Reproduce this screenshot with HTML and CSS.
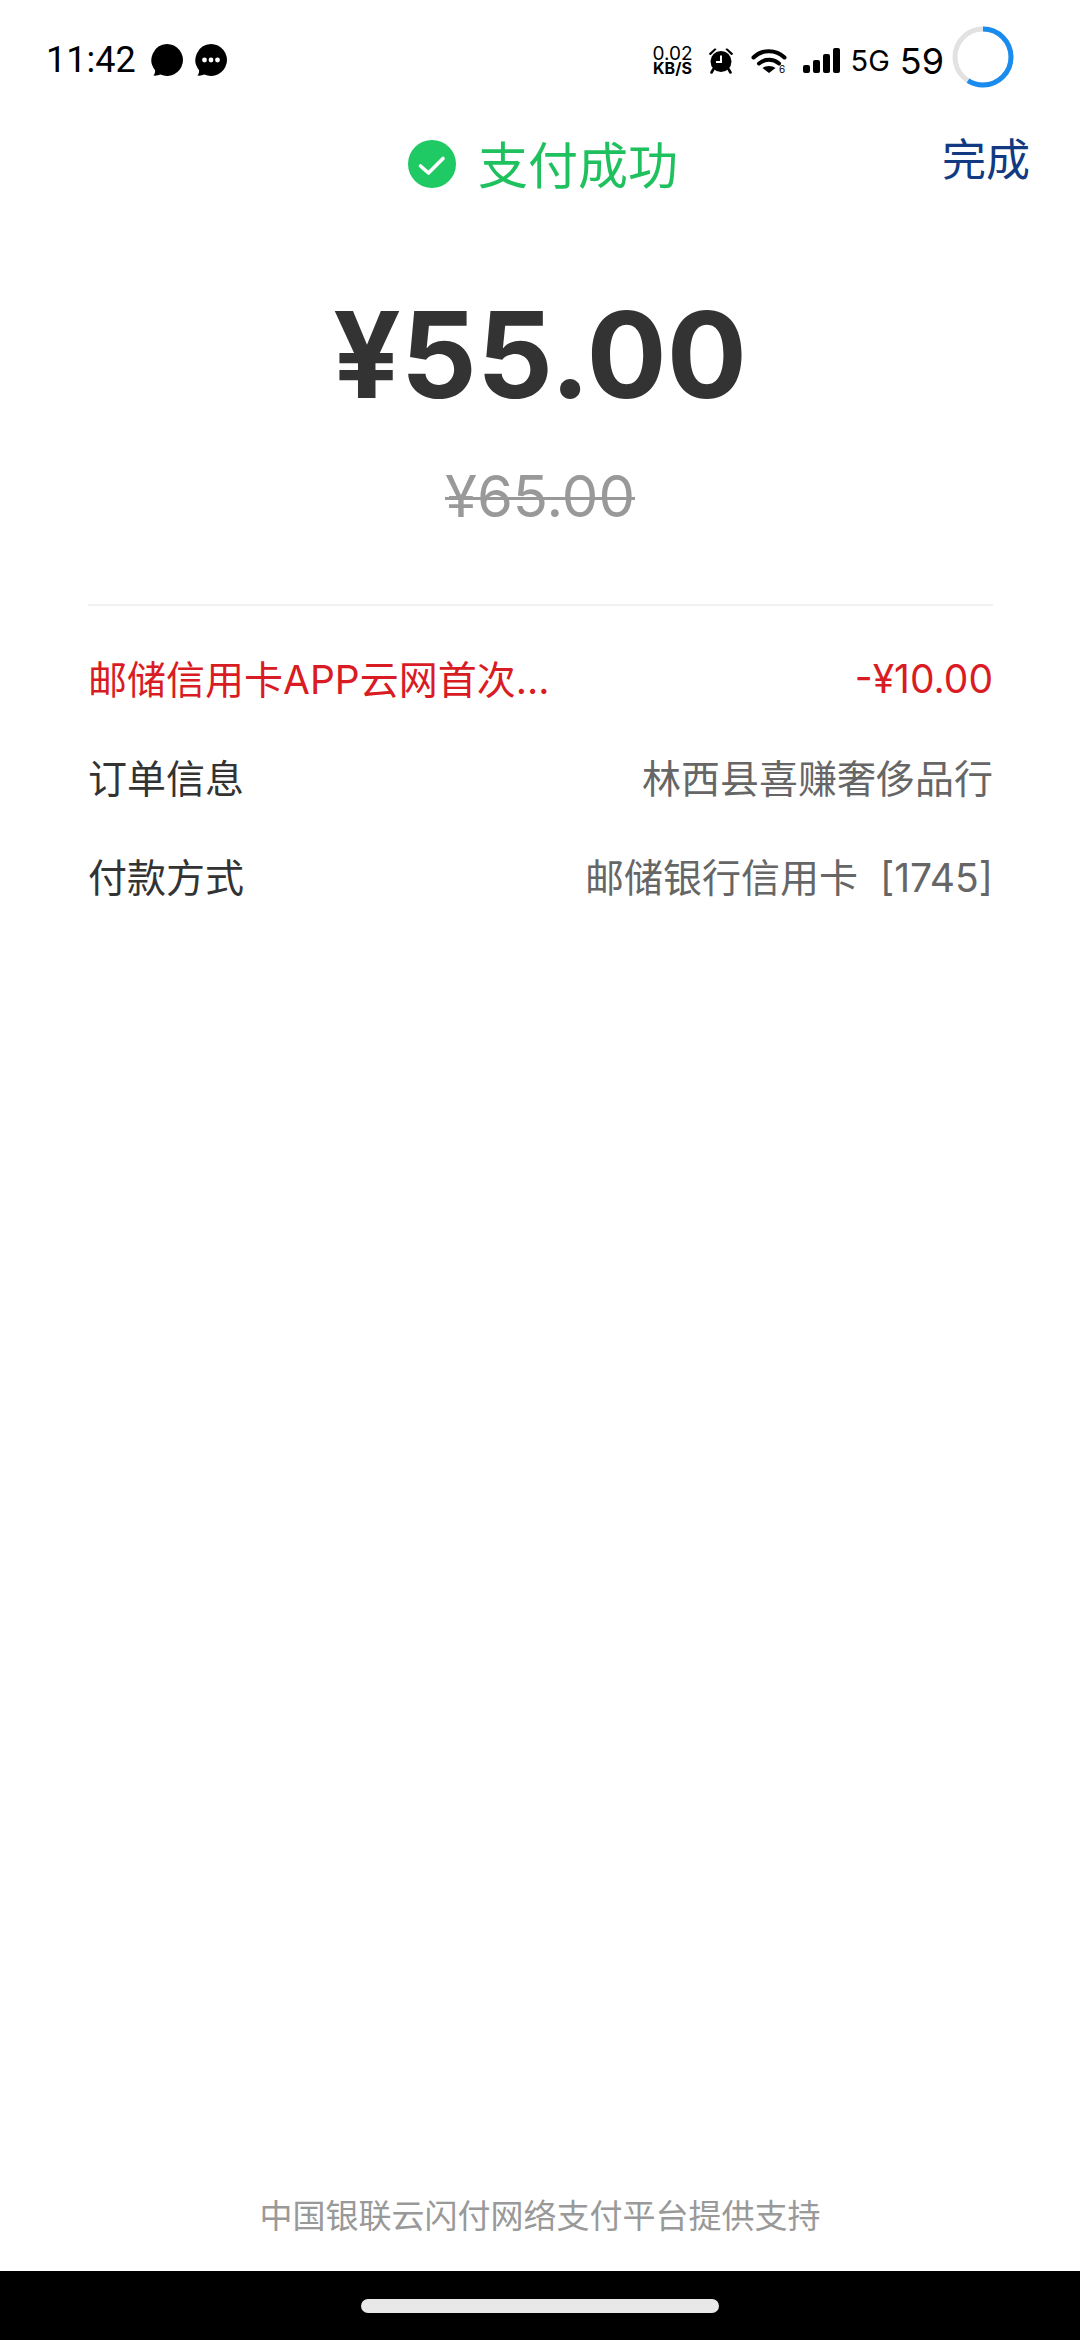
FILE: index.html
```html
<!DOCTYPE html>
<html lang="zh-CN">
<head>
    <meta charset="UTF-8">
    <meta name="viewport" content="width=device-width, initial-scale=1.0">
    <title>支付成功</title>
    <link rel="stylesheet" href="styles.css">
</head>
<body>
    <div class="page">
        <div class="status-bar">
            <div class="status-left">
                <span class="time">11:42</span>
                <svg class="bubble" viewBox="0 0 32 32">
                    <path d="M16 0a16 16 0 1 1-6.600 30.600c-2 .9-4.600 1.300-7 1 1.200-1.500 1.800-3.200 1.700-5.400A16 16 0 0 1 16 0z"/>
                </svg>
                <svg class="bubble" viewBox="0 0 32 32">
                    <path d="M16 0a16 16 0 1 1-6.600 30.600c-2 .9-4.600 1.300-7 1 1.200-1.500 1.800-3.200 1.700-5.400A16 16 0 0 1 16 0z"/>
                    <circle cx="9.500" cy="16" r="2.400" fill="#fff"/>
                    <circle cx="16" cy="16" r="2.400" fill="#fff"/>
                    <circle cx="22.500" cy="16" r="2.400" fill="#fff"/>
                </svg>
            </div>
            <div class="status-right">
                <div class="speed">
                    <span class="speed-num">0.02</span>
                    <span class="speed-unit">KB/S</span>
                </div>
                <svg class="alarm" viewBox="0 0 26 27">
                    <path d="M1 6.500 6 2c1-.8 2-.6 2.600.2L2.800 8C1.800 8 .8 7.400 1 6.500zM25 6.500 20 2c-1-.8-2-.6-2.600.2L23.200 8c1 0 2-.6 1.800-1.500z"/>
                    <circle cx="13" cy="14.500" r="10.500"/>
                    <path d="M5.500 22 3.500 25.500M20.500 22l2 3.500" stroke="#000" stroke-width="2.600" stroke-linecap="round"/>
                    <path d="M13 8.500v6.500H8" fill="none" stroke="#fff" stroke-width="2"/>
                </svg>
                <svg class="wifi" viewBox="0 0 36 32">
                    <path d="M2.500 9.500C11 1 25 1 33.500 9.500M8 15.500c6-5 14-5 20 0" fill="none" stroke="#000" stroke-width="4" stroke-linecap="round"/>
                    <path d="M11.500 20c3-2.700 10-2.700 13 0L18 25z"/>
                    <text x="28" y="25" class="wifi-num">6</text>
                </svg>
                <div class="signal">
                    <span class="bar bar-1"></span>
                    <span class="bar bar-2"></span>
                    <span class="bar bar-3"></span>
                    <span class="bar bar-4"></span>
                </div>
                <span class="net">5G</span>
                <span class="battery-num">59</span>
                <svg class="battery-ring" viewBox="0 0 62 62">
                    <circle cx="31" cy="31" r="28" fill="none" stroke="#e2e2e2" stroke-width="5"/>
                    <circle cx="31" cy="31" r="28" fill="none" stroke="#1a8cf0" stroke-width="5" pathLength="100" stroke-dasharray="59 100" transform="rotate(-90 31 31)"/>
                </svg>
            </div>
        </div>

        <div class="title-row">
            <div></div>
            <div class="title">
                <svg class="check" viewBox="0 0 48 48">
                    <circle cx="24" cy="24" r="24" fill="#1fc963"/>
                    <path d="M12.500 26 20.500 33 35 18.500" fill="none" stroke="#fff" stroke-width="3.600" stroke-linecap="round" stroke-linejoin="round"/>
                </svg>
                <span class="title-text">支付成功</span>
            </div>
            <a class="done">完成</a>
        </div>

        <div class="amount">¥55.00</div>
        <div class="original">¥65.00</div>

        <div class="details">
            <div class="row discount">
                <span>邮储信用卡APP云网首次...</span>
                <span class="discount-amount">-¥10.00</span>
            </div>
            <div class="row">
                <span>订单信息</span>
                <span class="value">林西县喜赚奢侈品行</span>
            </div>
            <div class="row">
                <span>付款方式</span>
                <span class="value">邮储银行信用卡<span class="card-no">[1745]</span></span>
            </div>
        </div>

        <div class="footer-note">中国银联云闪付网络支付平台提供支持</div>
        <div class="nav-bar"><span class="home-pill"></span></div>
    </div>
</body>
</html>
```

FILE: styles.css
```css
body {
    margin: 0;
    padding: 0;
    background-color: #fff;
    font-family: "Inter", "Noto Sans CJK SC", sans-serif;
}

.page {
    width: 1080px;
    height: 2340px;
    display: flex;
    flex-direction: column;
    overflow: hidden;
}

/* status bar */
.status-bar {
    height: 118px;
    flex: none;
    display: flex;
    justify-content: space-between;
    align-items: center;
    padding: 0 66px 0 46px;
    color: #000;
}

.status-left {
    display: flex;
    align-items: center;
}

.time {
    font-family: Roboto, sans-serif;
    font-size: 36px;
    width: 105px;
    margin-top: 2px;
}

.bubble {
    width: 32px;
    height: 32px;
    margin-right: 12px;
    margin-top: 2px;
}

.status-right {
    display: flex;
    align-items: center;
}

.speed {
    display: flex;
    flex-direction: column;
    align-items: center;
    width: 40px;
    margin-top: 3px;
    font-family: "Inter", sans-serif;
    line-height: 15px;
}

.speed-num {
    font-size: 19px;
}

.speed-unit {
    font-size: 16px;
    font-weight: 700;
}

.alarm {
    width: 26px;
    height: 27px;
    margin-left: 15px;
    margin-top: 3px;
}

.wifi {
    width: 36px;
    height: 32px;
    margin-left: 17px;
    margin-top: 9px;
}

.wifi-num {
    font-family: "Inter", sans-serif;
    font-size: 10px;
}

.signal {
    display: flex;
    align-items: flex-end;
    gap: 3px;
    height: 25px;
    margin-left: 16px;
    margin-top: 3px;
}

.bar {
    width: 7px;
    background-color: #000;
    border-radius: 2px;
}

.bar-1 { height: 8px; }
.bar-2 { height: 13px; }
.bar-3 { height: 19px; }
.bar-4 { height: 25px; }

.net {
    font-family: "Inter", sans-serif;
    font-size: 29px;
    margin-left: 11px;
    margin-top: 3px;
}

.battery-num {
    font-family: "Inter", sans-serif;
    font-size: 36px;
    margin-left: 10px;
    margin-top: 3px;
}

.battery-ring {
    width: 62px;
    height: 62px;
    margin-left: 8px;
    margin-top: -4px;
}

/* title */
.title-row {
    flex: none;
    height: 92px;
    display: grid;
    grid-template-columns: 1fr auto 1fr;
    align-items: center;
    padding: 0 50px 0 56px;
}

.title {
    display: flex;
    align-items: center;
    gap: 22px;
    color: #1fc15f;
    font-size: 50px;
}

.title-text {
    margin-top: -4px;
}

.check {
    width: 48px;
    height: 48px;
}

.done {
    justify-self: end;
    color: #123a82;
    font-size: 44px;
    margin-top: -14px;
}

/* amount */
.amount {
    margin-top: 72px;
    text-align: center;
    color: #333;
    font-size: 119px;
    font-weight: 700;
    line-height: 146px;
}

.original {
    margin-top: 33px;
    text-align: center;
    color: #999;
    font-size: 58px;
    line-height: 70px;
    text-decoration: line-through;
    text-decoration-thickness: 3px;
}

/* detail rows */
.details {
    margin: 73px 87px 0 88px;
    padding-top: 21px;
    border-top: 2px solid #f2f2f2;
}

.row {
    display: flex;
    justify-content: space-between;
    align-items: center;
    height: 99px;
    font-size: 39px;
    color: #333;
}

.discount {
    color: #d91c24;
}

.discount-amount {
    margin-top: 3px;
}

.value {
    color: #666;
}

.card-no {
    margin-left: 22px;
}

.footer-note {
    margin-top: auto;
    height: 56px;
    line-height: 56px;
    text-align: center;
    font-size: 33px;
    color: #999;
}

.nav-bar {
    flex: none;
    height: 69px;
    margin-top: 27px;
    background-color: #000;
    display: flex;
    justify-content: center;
    align-items: flex-start;
}

.home-pill {
    width: 358px;
    height: 14px;
    margin-top: 28px;
    border-radius: 7px;
    background-color: #e8e8e8;
}
```
